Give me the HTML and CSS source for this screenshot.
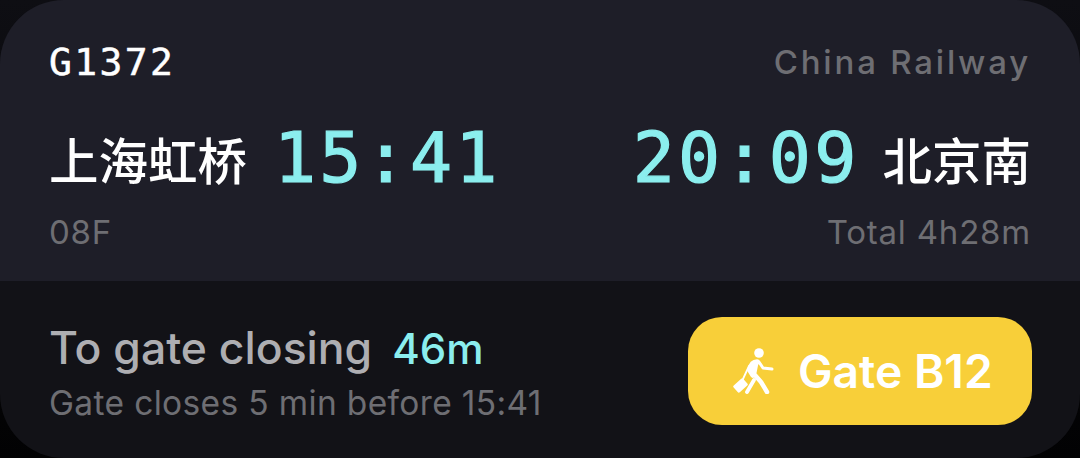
FILE: index.html
```html
<!DOCTYPE html>
<html lang="en">
<head>
    <meta charset="UTF-8">
    <title>Train Ticket</title>
    <link rel="stylesheet" href="styles.css">
</head>
<body>
    <main class="card">
        <section class="trip">
            <div class="row row-head">
                <span class="train-no">G1372</span>
                <span class="operator">China Railway</span>
            </div>
            <div class="row row-times">
                <div class="stop stop-from">
                    <span class="station">上海虹桥</span>
                    <span class="time">15:41</span>
                </div>
                <div class="stop stop-to">
                    <span class="time">20:09</span>
                    <span class="station">北京南</span>
                </div>
            </div>
            <div class="row row-meta">
                <span>08F</span>
                <span>Total 4h28m</span>
            </div>
        </section>
        <section class="gate">
            <div class="gate-info">
                <div class="gate-title">
                    <span>To gate closing</span>
                    <span class="countdown">46m</span>
                </div>
                <div class="gate-note">Gate closes 5 min before 15:41</div>
            </div>
            <div class="gate-badge">
                <svg class="walker" viewBox="0 0 42 46" width="42" height="46" fill="none" stroke="#fff" stroke-linecap="round" stroke-linejoin="round">
                    <circle cx="26" cy="5" r="4.800" fill="#fff" stroke="none"/>
                    <path d="M24 14 C20 14 18 17 17 22 L20 27" stroke-width="5.500"/>
                    <path d="M26 14 L30 20 L39 21" stroke-width="3"/>
                    <path d="M23 16 L21 26 L28 34 L34 44" stroke-width="4.500"/>
                    <path d="M21 32 L14 44" stroke-width="3.800"/>
                    <path d="M16 18 L10 31" stroke-width="1.800"/>
                    <rect x="3" y="31" width="9" height="13" rx="1.500" transform="rotate(48 7.500 37.500)" fill="#fff" stroke="none"/>
                </svg>
                <span>Gate B12</span>
            </div>
        </section>
    </main>
</body>
</html>
```

FILE: styles.css
```css
body {
    margin: 0;
    background: linear-gradient(#0e0e13, #020203);
    font-family: 'Inter', 'Noto Sans CJK SC', sans-serif;
}

.card {
    width: 1080px;
    height: 458px;
    border-radius: 64px;
    overflow: hidden;
    display: flex;
    flex-direction: column;
}

.trip {
    height: 281px;
    box-sizing: border-box;
    padding: 40px 49px 0 49px;
    background-color: #1e1e28;
}

.row {
    display: flex;
    justify-content: space-between;
    align-items: center;
}

.row-head {
    height: 44px;
}

.train-no {
    font-family: 'DejaVu Sans Mono', monospace;
    font-size: 38px;
    letter-spacing: 2.400px;
    -webkit-text-stroke: 0.500px #fff;
    color: #fff;
}

.operator {
    font-size: 33px;
    font-weight: 500;
    letter-spacing: 2.800px;
    color: #6e6e73;
}

.row-times {
    height: 88px;
    margin-top: 30px;
}

.stop {
    display: flex;
    align-items: center;
}

.stop-from {
    gap: 27px;
}

.stop-to {
    gap: 23px;
}

.station {
    font-family: 'Noto Sans CJK SC', sans-serif;
    font-size: 49.500px;
    font-weight: 500;
    color: #fff;
}

.time {
    font-family: 'DejaVu Sans Mono', monospace;
    font-size: 70px;
    letter-spacing: 3.200px;
    -webkit-text-stroke: 1.200px #8beeee;
    color: #8beeee;
}

.row-meta {
    margin-top: 10px;
    font-size: 33px;
    letter-spacing: 0.800px;
    color: #6e6e73;
}

.gate {
    flex: 1;
    display: flex;
    justify-content: space-between;
    align-items: center;
    padding: 0 48px 0 49px;
    background-color: #121217;
}

.gate-info {
    padding-top: 4px;
}

.gate-title {
    display: flex;
    align-items: baseline;
    gap: 20px;
    font-size: 44.500px;
    font-weight: 500;
    color: #aeaeb2;
}

.countdown {
    font-size: 42px;
    font-weight: 500;
    color: #8beeee;
}

.gate-note {
    margin-top: 8px;
    font-size: 33.500px;
    letter-spacing: 0.350px;
    color: #6e6e73;
}

.gate-badge {
    width: 344px;
    height: 108px;
    margin-top: 2px;
    box-sizing: border-box;
    padding-left: 45px;
    border-radius: 34px;
    display: flex;
    align-items: center;
    gap: 23px;
    background-color: #f8cf39;
    color: #fff;
    font-size: 46.200px;
    font-weight: 600;
}
```
